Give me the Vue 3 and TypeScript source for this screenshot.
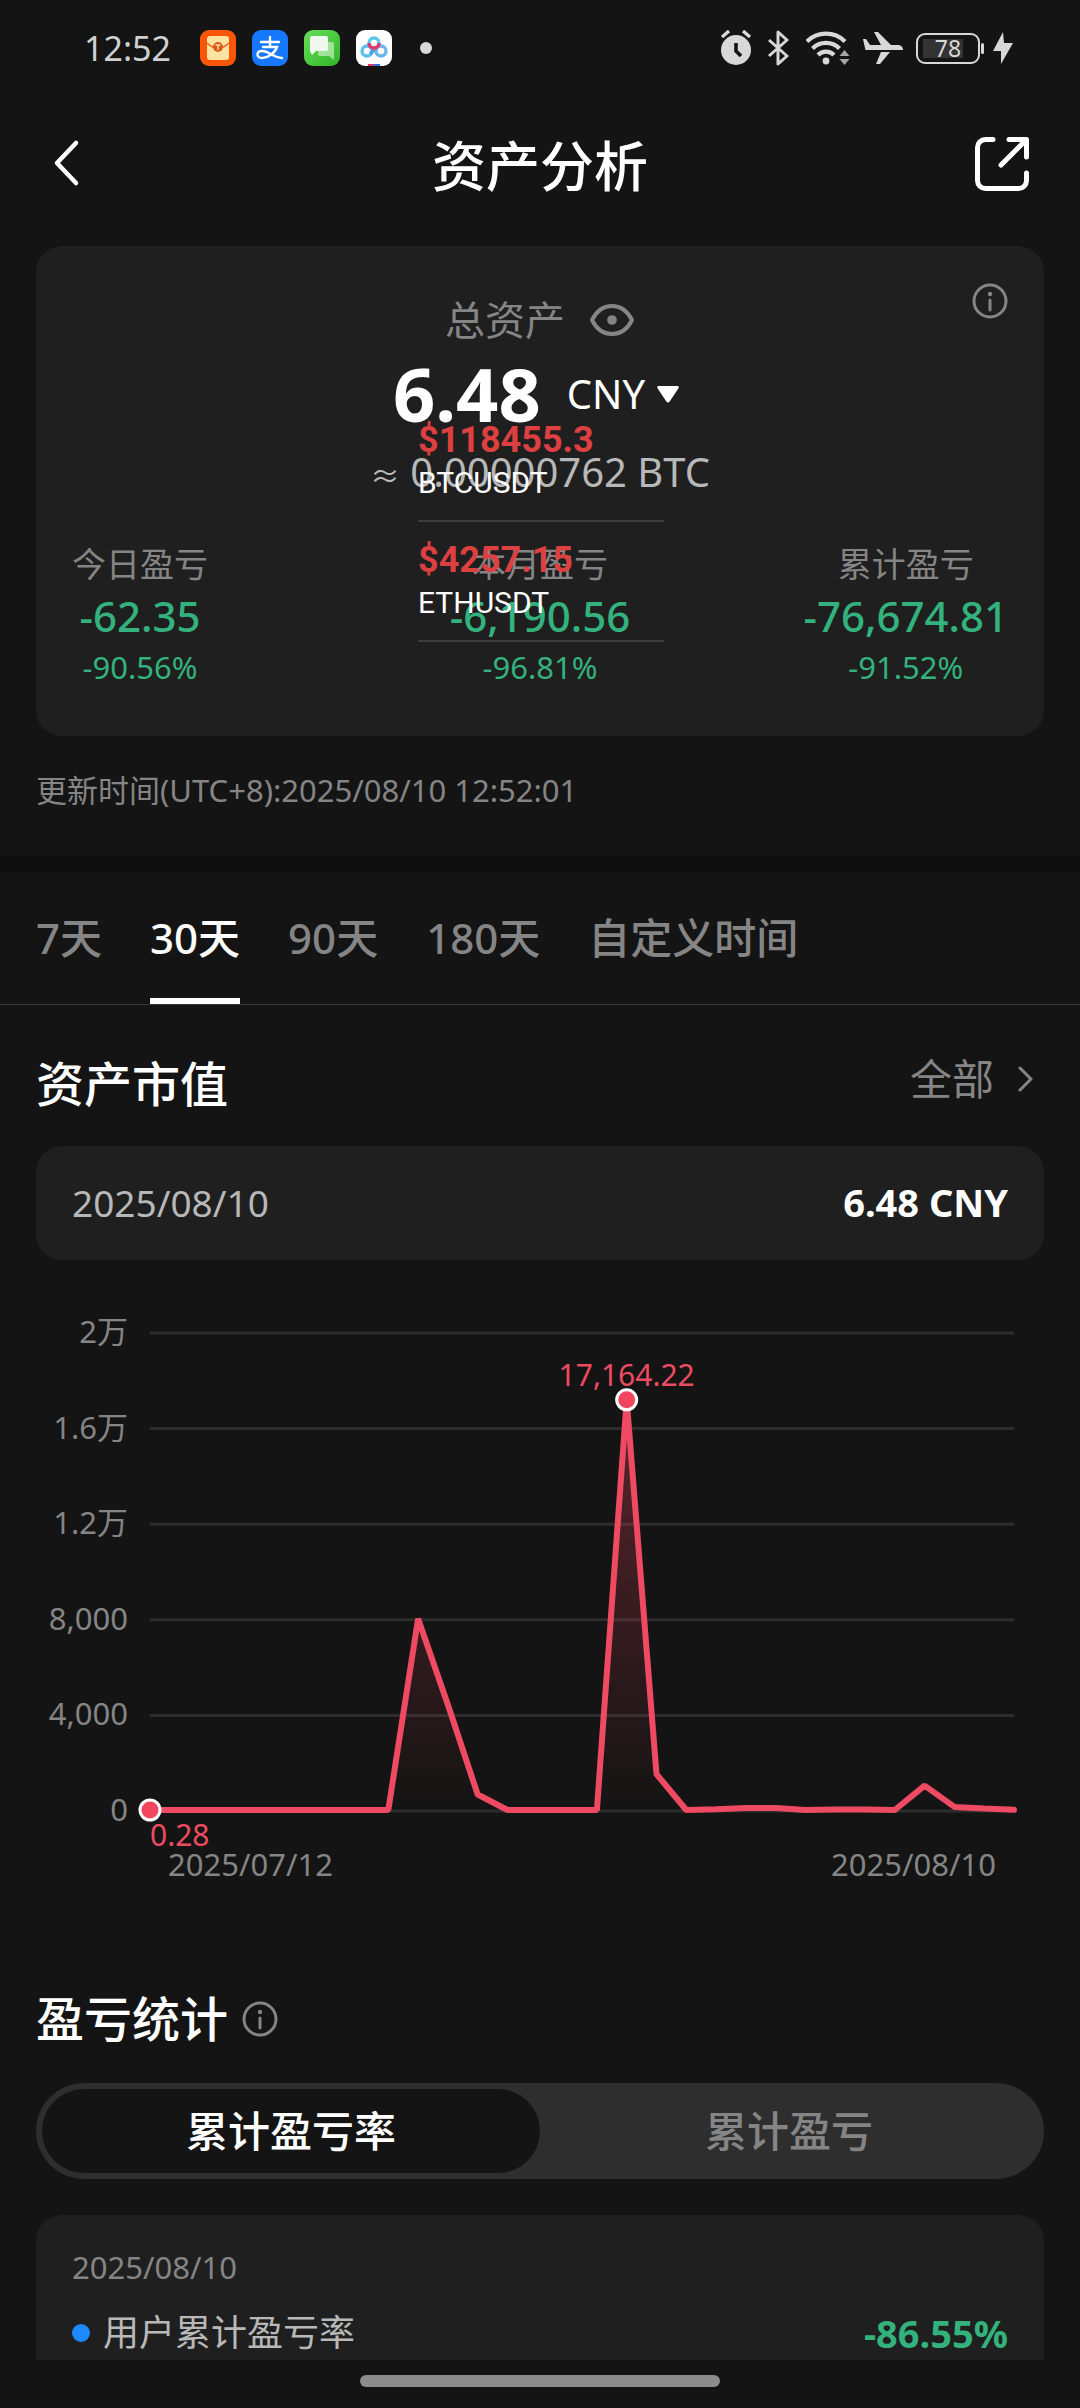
<script setup lang="ts">
import { computed, ref } from 'vue'

interface Quote { price: string; symbol: string }
interface Profit { label: string; value: string; rate: string }

const profits: Profit[] = [
  { label: '今日盈亏', value: '-62.35', rate: '-90.56%' },
  { label: '本月盈亏', value: '-6,190.56', rate: '-96.81%' },
  { label: '累计盈亏', value: '-76,674.81', rate: '-91.52%' },
]

const quotes: Quote[] = [
  { price: '$118455.3', symbol: 'BTCUSDT' },
  { price: '$4257.15', symbol: 'ETHUSDT' },
]

const ranges = ['7天', '30天', '90天', '180天', '自定义时间']
const activeRange = ref('30天')

const modes = ['累计盈亏率', '累计盈亏']
const activeMode = ref('累计盈亏率')

const plot = { left: 114, right: 978, top: 33, bottom: 511 }
const maxValue = 20000
const series = [
  0.28, 0, 0, 0, 0, 0, 0, 0, 0, 8000, 4400, 650, 0, 0, 0, 0, 17164.22, 1500, 0, 30,
  80, 80, 0, 15, 20, 0, 1020, 130, 60, 6.48,
]
const ticks = [
  { value: 20000, label: '2万' },
  { value: 16000, label: '1.6万' },
  { value: 12000, label: '1.2万' },
  { value: 8000, label: '8,000' },
  { value: 4000, label: '4,000' },
  { value: 0, label: '0' },
]

const xOf = (i: number) => plot.left + (i * (plot.right - plot.left)) / (series.length - 1)
const yOf = (v: number) => plot.bottom - (v / maxValue) * (plot.bottom - plot.top)

const linePoints = computed(() =>
  series.map((v, i) => `${xOf(i).toFixed(1)},${(yOf(v) - 1).toFixed(1)}`).join(' '),
)
const areaPoints = computed(
  () => `${plot.left},${plot.bottom} ${linePoints.value} ${plot.right},${plot.bottom}`,
)
const peak = series.indexOf(Math.max(...series))
</script>

<template>
  <div class="page">
    <div class="status">
      <span class="clock">12:52</span>
      <div class="apps">
        <svg viewBox="0 0 36 36" width="36" height="36">
          <rect width="36" height="36" rx="9" fill="#fb5607" />
          <rect x="7" y="6" width="22" height="24" rx="3" fill="#ffe3a3" />
          <path d="M7 13 Q12 18 18 18 Q24 18 29 13" fill="none" stroke="#e5651a" stroke-width="1.5" />
          <circle cx="18" cy="17" r="5" fill="#e0571a" />
          <path d="M15.5 15h5M18 15v5" stroke="#ffe3a3" stroke-width="1.4" />
        </svg>
        <svg viewBox="0 0 36 36" width="36" height="36">
          <rect width="36" height="36" rx="9" fill="#1677ff" />
          <path d="M9 12h18M18 7v9M11 17h14C23 23 16 28 10 28C4 28 4 21 10 21C17 21 22 28 30 28" fill="none" stroke="#fff" stroke-width="2.4" stroke-linecap="round" />
        </svg>
        <svg viewBox="0 0 36 36" width="36" height="36">
          <defs>
            <linearGradient id="msg" x1="0" y1="0" x2="1" y2="1">
              <stop offset="0" stop-color="#6ade5c" />
              <stop offset="1" stop-color="#2fb524" />
            </linearGradient>
          </defs>
          <rect width="36" height="36" rx="9" fill="url(#msg)" />
          <path d="M16 12h12a2 2 0 0 1 2 2v16l-5-4H16a2 2 0 0 1-2-2z" fill="#fff" opacity="0.5" />
          <path d="M8 6h14a2 2 0 0 1 2 2v11a2 2 0 0 1-2 2H12l-4 4-2-4V8a2 2 0 0 1 2-2z" fill="#f1f8ef" />
        </svg>
        <svg viewBox="0 0 36 36" width="36" height="36">
          <rect width="36" height="36" rx="9" fill="#fff" />
          <g fill="none" stroke-width="3.4">
            <circle cx="11" cy="21" r="5" stroke="#5cc3ee" />
            <circle cx="25" cy="21" r="5" stroke="#6fb4ea" />
            <path d="M14 24l7-7" stroke="#4aa3e6" />
            <circle cx="18" cy="13" r="5" stroke="#5fc8ef" />
            <path d="M13 13a5 5 0 0 0 10 0" stroke="#e8356d" />
          </g>
          <path d="M12 36v-2h6v2z" fill="#e8356d" />
          <path d="M18 36v-2h6v2z" fill="#2f6fe0" />
        </svg>
      </div>
      <span class="more-dot"></span>
      <div class="signals">
        <svg viewBox="0 0 32 36" width="32" height="36" fill="#d8d8d8">
          <circle cx="16" cy="20" r="15" />
          <path d="M2 7l7-6M30 7l-7-6" stroke="#d8d8d8" stroke-width="3.4" />
          <path d="M16 13v8l5 5" fill="none" stroke="#141414" stroke-width="3.6" />
        </svg>
        <svg viewBox="-3 0 28 36" width="28" height="36" fill="none" stroke="#d8d8d8" stroke-width="3" stroke-linejoin="round">
          <path d="M1 10l18 16-9 8V2l9 8L1 26" />
        </svg>
        <svg viewBox="0 0 44 36" width="44" height="36">
          <g fill="none" stroke="#d8d8d8" stroke-width="4.2">
            <path d="M1 11.500a27 27 0 0 1 38 0" />
            <path d="M6.500 18.500a19 19 0 0 1 27 0" />
            <path d="M12 25a11 11 0 0 1 16 0" />
          </g>
          <circle cx="20" cy="31" r="3.400" fill="#d8d8d8" />
          <path d="M33.500 26l5-6 5 6zM33.500 29l5 6 5-6z" fill="#a5a5a5" />
        </svg>
        <svg viewBox="0 0 40 36" width="40" height="36" fill="#d8d8d8">
          <path d="M0 9h3l4 6h11L11 2h4l13 13h8q4 1 4 5H3q-1 0-1-2zM18 22h9L17 34h-4z" />
        </svg>
        <div class="battery"><span>78</span></div>
        <svg viewBox="0 0 20 32" width="20" height="32" fill="#d8d8d8">
          <path d="M10 0L0 19h8v13l12-21h-9z" />
        </svg>
      </div>
    </div>

    <header class="bar">
      <button class="icon-btn" aria-label="返回">
        <svg viewBox="0 0 54 54" width="54" height="54" fill="none" stroke="#fff" stroke-width="4.500" stroke-linecap="round" stroke-linejoin="round">
          <path d="M39 6L20 26l19 20" />
        </svg>
      </button>
      <h1>资产分析</h1>
      <button class="icon-btn share" aria-label="分享">
        <svg viewBox="0 0 54 54" width="54" height="54" fill="none" stroke="#fff" stroke-width="5" stroke-linecap="round" stroke-linejoin="round">
          <path d="M18 2.500H10.500a8 8 0 0 0-8 8v33a8 8 0 0 0 8 8h33a8 8 0 0 0 8-8V36" />
          <path d="M34 2.500h17.500V20M51 3L26 28" />
        </svg>
      </button>
    </header>

    <main>
      <section class="card summary">
        <button class="info-btn" aria-label="说明">
          <svg class="info" viewBox="0 0 36 36" width="36" height="36">
            <circle cx="18" cy="18" r="16" />
            <path d="M18 17v10" /><circle class="dot" cx="18" cy="11" r="2.200" />
          </svg>
        </button>
        <div class="total-label">
          <span>总资产</span>
          <svg viewBox="0 0 46 34" width="46" height="34" fill="none" stroke="#858585" stroke-width="4">
            <path d="M3 17C8 7 15 3 23 3s15 4 20 14c-5 10-12 14-20 14S8 27 3 17z" stroke-linejoin="round" />
            <circle cx="23" cy="17" r="4.800" fill="#858585" stroke="none" />
          </svg>
        </div>
        <div class="total">
          <strong>6.48</strong>
          <button class="currency">
            CNY
            <svg viewBox="0 0 22 17" width="22" height="17"><path d="M2 0h18q3 0 1 3l-8 12q-2 3-4 0L1 3q-2-3 1-3z" fill="#fff" /></svg>
          </button>
        </div>
        <p class="btc"><span class="approx">≈</span> 0.00000762 BTC</p>
        <div class="profits">
          <div v-for="p in profits" :key="p.label" class="profit">
            <span class="p-label">{{ p.label }}</span>
            <span class="p-value">{{ p.value }}</span>
            <span class="p-rate">{{ p.rate }}</span>
          </div>
        </div>
        <div class="ticker">
          <div v-for="q in quotes" :key="q.symbol" class="quote">
            <b>{{ q.price }}</b>
            <span>{{ q.symbol }}</span>
          </div>
        </div>
      </section>

      <p class="updated">更新时间(UTC+8):2025/08/10 12:52:01</p>

      <nav class="tabs" role="tablist">
        <button
          v-for="r in ranges"
          :key="r"
          role="tab"
          :aria-selected="r === activeRange"
          :class="{ active: r === activeRange }"
          @click="activeRange = r"
        >{{ r }}</button>
      </nav>

      <section class="value">
        <div class="head">
          <h2>资产市值</h2>
          <button class="all">
            全部
            <svg viewBox="0 0 16 26" width="16" height="26" fill="none" stroke="#858585" stroke-width="3" stroke-linecap="round" stroke-linejoin="round"><path d="M2 2l11 11L2 24" /></svg>
          </button>
        </div>
        <div class="card point">
          <time>2025/08/10</time>
          <strong>6.48 CNY</strong>
        </div>
        <svg class="chart" viewBox="0 0 1008 600" role="img" aria-label="资产市值">
          <defs>
            <linearGradient id="fade" x1="0" y1="0" x2="0" y2="1">
              <stop offset="0" stop-color="#f2465f" stop-opacity="0.32" />
              <stop offset="1" stop-color="#f2465f" stop-opacity="0" />
            </linearGradient>
          </defs>
          <g v-for="t in ticks" :key="t.label">
            <line class="grid" :x1="plot.left" :x2="plot.right" :y1="yOf(t.value)" :y2="yOf(t.value)" />
            <text class="axis" x="92" :y="yOf(t.value) + 10" text-anchor="end">{{ t.label }}</text>
          </g>
          <polygon :points="areaPoints" fill="url(#fade)" />
          <polyline class="line" :points="linePoints" />
          <circle class="marker" :cx="xOf(0)" :cy="yOf(series[0]) - 1" r="10" />
          <circle class="marker" :cx="xOf(peak)" :cy="yOf(series[peak]) - 1" r="10" />
          <text class="mark" :x="xOf(0)" y="546">0.28</text>
          <text class="mark" :x="xOf(peak)" y="86" text-anchor="middle">17,164.22</text>
          <text class="axis" x="132" y="576">2025/07/12</text>
          <text class="axis" x="960" y="576" text-anchor="end">2025/08/10</text>
        </svg>
      </section>

      <section class="stats">
        <div class="head start">
          <h2>盈亏统计</h2>
          <svg class="info" viewBox="0 0 36 36" width="36" height="36">
            <circle cx="18" cy="18" r="16" />
            <path d="M18 17v10" /><circle class="dot" cx="18" cy="11" r="2.200" />
          </svg>
        </div>
        <div class="segment">
          <button
            v-for="m in modes"
            :key="m"
            :class="{ active: m === activeMode }"
            :aria-pressed="m === activeMode"
            @click="activeMode = m"
          >{{ m }}</button>
        </div>
        <div class="card detail">
          <time>2025/08/10</time>
          <div class="row">
            <i></i>
            <span>用户累计盈亏率</span>
            <strong>-86.55%</strong>
          </div>
        </div>
      </section>
    </main>

    <footer><span></span></footer>
  </div>
</template>

<style>
body {
  background: #141414;
}
</style>

<style scoped>
.page {
  display: flex;
  flex-direction: column;
  height: 100vh;
  background: #141414;
  color: #fff;
  font-family: 'Noto Sans', 'Noto Sans CJK SC', sans-serif;
  font-size: 37px;
}
.page * {
  box-sizing: border-box;
}
svg {
  display: block;
  flex: none;
}
button {
  padding: 0;
  border: 0;
  background: none;
  color: inherit;
  font: inherit;
}
h1,
h2,
p {
  margin: 0;
}
.status {
  flex: none;
  display: flex;
  align-items: center;
  height: 96px;
  padding: 0 67px 0 84px;
}
.clock {
  width: 116px;
  color: #d0d0d0;
  font-size: 34px;
  line-height: 48px;
}
.apps {
  display: flex;
  gap: 16px;
}
.more-dot {
  width: 12px;
  height: 12px;
  margin-left: 28px;
  border-radius: 50%;
  background: #d8d8d8;
}
.signals {
  display: flex;
  align-items: center;
  gap: 13px;
  margin-left: auto;
}
.battery {
  position: relative;
  width: 64px;
  height: 31px;
  padding: 3px;
  border: 2px solid #d8d8d8;
  border-radius: 9px;
  color: #d8d8d8;
  font-size: 23px;
  line-height: 21px;
  text-align: center;
  background: linear-gradient(#333, #333) 5px 4px / 40px 19px no-repeat;
}
.battery::after {
  content: '';
  position: absolute;
  right: -6px;
  top: 8px;
  width: 3px;
  height: 11px;
  border-radius: 2px;
  background: #d8d8d8;
}
.bar {
  flex: none;
  display: grid;
  grid-template-columns: 1fr auto 1fr;
  align-items: center;
  height: 136px;
  padding: 0 51px 0 37px;
}
.share {
  justify-self: end;
}
.icon-btn {
  width: 54px;
}
h1 {
  padding: 3px 0 0 14px;
  font-size: 54px;
  font-weight: 500;
  line-height: 72px;
}
main {
  flex: 1;
  min-height: 0;
  overflow: hidden;
}
.card {
  margin: 0 36px;
  border-radius: 26px;
  background: #1f1f1f;
}
.summary {
  position: relative;
  margin-top: 14px;
  padding: 46px 36px;
}
.info {
  fill: none;
  stroke: #858585;
  stroke-width: 3;
  stroke-linecap: round;
}
.info .dot {
  fill: #858585;
  stroke: none;
}
.info-btn {
  position: absolute;
  top: 37px;
  right: 36px;
}
.total-label {
  display: flex;
  align-items: center;
  justify-content: center;
  gap: 24px;
  color: #858585;
  font-size: 40px;
  line-height: 56px;
}
.total {
  display: flex;
  align-items: center;
  justify-content: center;
  gap: 26px;
  margin-top: 2px;
  line-height: 88px;
}
.total strong {
  font-size: 74px;
  font-weight: 700;
}
.currency {
  display: flex;
  align-items: center;
  gap: 12px;
  padding-right: 8px;
  font-size: 40px;
}
.btc {
  margin-top: 4px;
  color: #b8b8b8;
  font-size: 40px;
  line-height: 60px;
  text-align: center;
}
.approx {
  font-size: 30px;
  line-height: 30px;
}
.profits {
  display: grid;
  grid-template-columns: 1fr auto 1fr;
  margin-top: 38px;
}
.profit {
  display: flex;
  flex-direction: column;
  align-items: center;
  justify-self: center;
  gap: 2px;
}
.profit:first-child {
  justify-self: start;
}
.profit:last-child {
  justify-self: end;
}
.p-label {
  color: #858585;
  font-size: 34px;
  line-height: 48px;
}
.p-value {
  color: #33b27e;
  font-size: 42px;
  font-weight: 500;
  line-height: 52px;
}
.p-rate {
  color: #33b27e;
  font-size: 31px;
  line-height: 46px;
}
.ticker {
  position: absolute;
  top: 156px;
  left: 50%;
  width: 246px;
  margin-left: -122px;
  font-family: Roboto, sans-serif;
}
.quote {
  display: flex;
  flex-direction: column;
  height: 120px;
  padding-top: 16px;
  border-bottom: 2px solid #3d3d3d;
}
.quote b {
  color: #dd4040;
  font-size: 36px;
  line-height: 44px;
}
.quote span {
  font-size: 30px;
  line-height: 42px;
}
.updated {
  margin: 34px 36px 46px;
  color: #858585;
  font-size: 31px;
  line-height: 40px;
}
.tabs {
  display: flex;
  gap: 48px;
  padding: 0 36px;
  border-top: 16px solid #0e0e0e;
  border-bottom: 1px solid #383838;
  color: #858585;
  font-size: 42px;
  font-weight: 500;
}
.tabs button {
  padding-top: 6px;
  border-bottom: 6px solid transparent;
  line-height: 120px;
  white-space: nowrap;
}
.tabs .active {
  border-color: #fff;
  color: #fff;
}
.head {
  display: flex;
  align-items: center;
  justify-content: space-between;
  padding: 0 36px;
  line-height: 64px;
}
.start {
  justify-content: flex-start;
  gap: 14px;
}
h2 {
  font-size: 48px;
  font-weight: 500;
}
.all {
  display: flex;
  align-items: center;
  gap: 24px;
  padding: 0 10px 10px 0;
  color: #858585;
  font-size: 42px;
}
.value {
  padding-top: 42px;
}
.point {
  display: flex;
  align-items: center;
  justify-content: space-between;
  height: 114px;
  margin-top: 25px;
  padding: 0 36px 2px;
  color: #b8b8b8;
}
strong {
  font-size: 38px;
  font-weight: 700;
}
.point strong {
  color: #fff;
}
.chart {
  width: calc(100% - 72px);
  height: auto;
  margin: 40px 36px 0;
}
.grid {
  stroke: #2d2d2d;
  stroke-width: 3;
}
.axis {
  fill: #858585;
  font-size: 31px;
}
.mark {
  fill: #ee4b62;
  font-size: 30px;
}
.line {
  fill: none;
  stroke: #ee4b62;
  stroke-width: 6;
  stroke-linecap: round;
  stroke-linejoin: bevel;
}
.marker {
  fill: #f2465f;
  stroke: #fff;
  stroke-width: 3;
}
.stats {
  padding-top: 87px;
}
.segment {
  display: grid;
  grid-template-columns: 1fr 1fr;
  margin: 32px 36px 36px;
  padding: 6px;
  border-radius: 48px;
  background: #2e2e2e;
  color: #858585;
  font-size: 42px;
  font-weight: 500;
  line-height: 84px;
}
.segment .active {
  border-radius: 42px;
  background: #141414;
  color: #fff;
}
.detail {
  padding: 32px 36px 36px;
}
.detail time {
  display: block;
  color: #858585;
  font-size: 31px;
  line-height: 40px;
}
.row {
  display: flex;
  align-items: center;
  gap: 13px;
  margin-top: 22px;
  color: #b8b8b8;
  font-size: 36px;
  line-height: 48px;
}
.row i {
  width: 18px;
  height: 18px;
  border-radius: 50%;
  background: #1e88ff;
}
.row strong {
  margin-left: auto;
  color: #33b27e;
}
footer {
  flex: none;
  display: flex;
  justify-content: center;
  height: 48px;
  padding-top: 15px;
}
footer span {
  width: 360px;
  height: 12px;
  border-radius: 6px;
  background: #8c8c8c;
}
</style>
